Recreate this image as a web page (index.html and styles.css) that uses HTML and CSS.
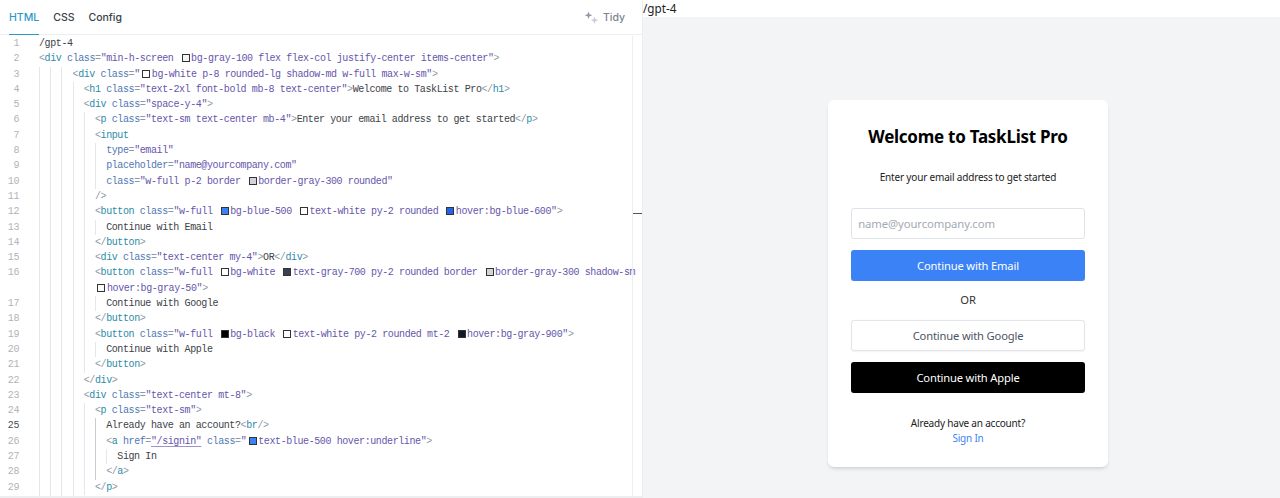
FILE: index.html
```html
<!DOCTYPE html>
<html lang="en">
<head>
<meta charset="utf-8">
<title>Playground</title>
<link rel="stylesheet" href="styles.css">
</head>
<body>
<div class="app">
  <section class="editor">
    <header class="tabs">
      <nav class="tablist">
        <span class="tab active">HTML</span>
        <span class="tab">CSS</span>
        <span class="tab">Config</span>
      </nav>
      <span class="tidy">
        <svg class="tidy-icon" width="15" height="15" viewBox="0 0 15 15"><path class="spark-dark" d="M4.500 1.500l1 2.800 2.800 1-2.800 1-1 2.800-1-2.800-2.800-1 2.800-1z"/><path class="spark-light" d="M10.500 6.500l1 2.800 2.800 1-2.800 1-1 2.800-1-2.800-2.800-1 2.800-1z"/></svg>
        Tidy
      </span>
    </header>
    <div class="code-wrap">
      <div class="code">
        <div class="row"><span class="num">1</span><span class="line"><span class="x">/gpt-4</span></span></div>
        <div class="row"><span class="num">2</span><span class="line"><span class="t">&lt;</span><span class="n">div</span> <span class="a">class</span><span class="t">=</span><span class="s">"min-h-screen <i class="sw gray100"></i>bg-gray-100 flex flex-col justify-center items-center"</span><span class="t">&gt;</span></span></div>
        <div class="row"><span class="num">3</span><span class="line"><i class="g"></i><i class="g"></i><i class="g"></i><span class="t">&lt;</span><span class="n">div</span> <span class="a">class</span><span class="t">=</span><span class="s">"<i class="sw white"></i>bg-white p-8 rounded-lg shadow-md w-full max-w-sm"</span><span class="t">&gt;</span></span></div>
        <div class="row"><span class="num">4</span><span class="line"><i class="g"></i><i class="g"></i><i class="g"></i><i class="g"></i><span class="t">&lt;</span><span class="n">h1</span> <span class="a">class</span><span class="t">=</span><span class="s">"text-2xl font-bold mb-8 text-center"</span><span class="t">&gt;</span><span class="x">Welcome to TaskList Pro</span><span class="t">&lt;/</span><span class="n">h1</span><span class="t">&gt;</span></span></div>
        <div class="row"><span class="num">5</span><span class="line"><i class="g"></i><i class="g"></i><i class="g"></i><i class="g"></i><span class="t">&lt;</span><span class="n">div</span> <span class="a">class</span><span class="t">=</span><span class="s">"space-y-4"</span><span class="t">&gt;</span></span></div>
        <div class="row"><span class="num">6</span><span class="line"><i class="g"></i><i class="g"></i><i class="g"></i><i class="g"></i><i class="g"></i><span class="t">&lt;</span><span class="n">p</span> <span class="a">class</span><span class="t">=</span><span class="s">"text-sm text-center mb-4"</span><span class="t">&gt;</span><span class="x">Enter your email address to get started</span><span class="t">&lt;/</span><span class="n">p</span><span class="t">&gt;</span></span></div>
        <div class="row"><span class="num">7</span><span class="line"><i class="g"></i><i class="g"></i><i class="g"></i><i class="g"></i><i class="g"></i><span class="t">&lt;</span><span class="n">input</span></span></div>
        <div class="row"><span class="num">8</span><span class="line"><i class="g"></i><i class="g"></i><i class="g"></i><i class="g"></i><i class="g"></i><i class="g"></i><span class="a">type</span><span class="t">=</span><span class="s">"email"</span></span></div>
        <div class="row"><span class="num">9</span><span class="line"><i class="g"></i><i class="g"></i><i class="g"></i><i class="g"></i><i class="g"></i><i class="g"></i><span class="a">placeholder</span><span class="t">=</span><span class="s">"name@yourcompany.com"</span></span></div>
        <div class="row"><span class="num">10</span><span class="line"><i class="g"></i><i class="g"></i><i class="g"></i><i class="g"></i><i class="g"></i><i class="g"></i><span class="a">class</span><span class="t">=</span><span class="s">"w-full p-2 border <i class="sw gray300"></i>border-gray-300 rounded"</span></span></div>
        <div class="row"><span class="num">11</span><span class="line"><i class="g"></i><i class="g"></i><i class="g"></i><i class="g"></i><i class="g"></i><span class="t">/&gt;</span></span></div>
        <div class="row"><span class="num">12</span><span class="line"><i class="g"></i><i class="g"></i><i class="g"></i><i class="g"></i><i class="g"></i><span class="t">&lt;</span><span class="n">button</span> <span class="a">class</span><span class="t">=</span><span class="s">"w-full <i class="sw blue500"></i>bg-blue-500 <i class="sw white"></i>text-white py-2 rounded <i class="sw blue600"></i>hover:bg-blue-600"</span><span class="t">&gt;</span></span></div>
        <div class="row"><span class="num">13</span><span class="line"><i class="g"></i><i class="g"></i><i class="g"></i><i class="g"></i><i class="g"></i><i class="g"></i><span class="x">Continue with Email</span></span></div>
        <div class="row"><span class="num">14</span><span class="line"><i class="g"></i><i class="g"></i><i class="g"></i><i class="g"></i><i class="g"></i><span class="t">&lt;/</span><span class="n">button</span><span class="t">&gt;</span></span></div>
        <div class="row"><span class="num">15</span><span class="line"><i class="g"></i><i class="g"></i><i class="g"></i><i class="g"></i><i class="g"></i><span class="t">&lt;</span><span class="n">div</span> <span class="a">class</span><span class="t">=</span><span class="s">"text-center my-4"</span><span class="t">&gt;</span><span class="x">OR</span><span class="t">&lt;/</span><span class="n">div</span><span class="t">&gt;</span></span></div>
        <div class="row"><span class="num">16</span><span class="line"><i class="g"></i><i class="g"></i><i class="g"></i><i class="g"></i><i class="g"></i><span class="t">&lt;</span><span class="n">button</span> <span class="a">class</span><span class="t">=</span><span class="s">"w-full <i class="sw white"></i>bg-white <i class="sw gray700"></i>text-gray-700 py-2 rounded border <i class="sw gray300"></i>border-gray-300 shadow-sm</span></span></div>
        <div class="row"><span class="num"></span><span class="line"><i class="g"></i><i class="g"></i><i class="g"></i><i class="g"></i><i class="g"></i><span class="s"><i class="sw gray50"></i>hover:bg-gray-50"</span><span class="t">&gt;</span></span></div>
        <div class="row"><span class="num">17</span><span class="line"><i class="g"></i><i class="g"></i><i class="g"></i><i class="g"></i><i class="g"></i><i class="g"></i><span class="x">Continue with Google</span></span></div>
        <div class="row"><span class="num">18</span><span class="line"><i class="g"></i><i class="g"></i><i class="g"></i><i class="g"></i><i class="g"></i><span class="t">&lt;/</span><span class="n">button</span><span class="t">&gt;</span></span></div>
        <div class="row"><span class="num">19</span><span class="line"><i class="g"></i><i class="g"></i><i class="g"></i><i class="g"></i><i class="g"></i><span class="t">&lt;</span><span class="n">button</span> <span class="a">class</span><span class="t">=</span><span class="s">"w-full <i class="sw black"></i>bg-black <i class="sw white"></i>text-white py-2 rounded mt-2 <i class="sw gray900"></i>hover:bg-gray-900"</span><span class="t">&gt;</span></span></div>
        <div class="row"><span class="num">20</span><span class="line"><i class="g"></i><i class="g"></i><i class="g"></i><i class="g"></i><i class="g"></i><i class="g"></i><span class="x">Continue with Apple</span></span></div>
        <div class="row"><span class="num">21</span><span class="line"><i class="g"></i><i class="g"></i><i class="g"></i><i class="g"></i><i class="g"></i><span class="t">&lt;/</span><span class="n">button</span><span class="t">&gt;</span></span></div>
        <div class="row"><span class="num">22</span><span class="line"><i class="g"></i><i class="g"></i><i class="g"></i><i class="g"></i><span class="t">&lt;/</span><span class="n">div</span><span class="t">&gt;</span></span></div>
        <div class="row"><span class="num">23</span><span class="line"><i class="g"></i><i class="g"></i><i class="g"></i><i class="g"></i><span class="t">&lt;</span><span class="n">div</span> <span class="a">class</span><span class="t">=</span><span class="s">"text-center mt-8"</span><span class="t">&gt;</span></span></div>
        <div class="row"><span class="num">24</span><span class="line"><i class="g"></i><i class="g"></i><i class="g"></i><i class="g"></i><i class="g"></i><span class="t">&lt;</span><span class="n">p</span> <span class="a">class</span><span class="t">=</span><span class="s">"text-sm"</span><span class="t">&gt;</span></span></div>
        <div class="row"><span class="num current">25</span><span class="line"><i class="g"></i><i class="g"></i><i class="g"></i><i class="g"></i><i class="g"></i><i class="g strong"></i><span class="x">Already have an account?</span><span class="t">&lt;</span><span class="n">br</span><span class="t">/&gt;</span></span></div>
        <div class="row"><span class="num">26</span><span class="line"><i class="g"></i><i class="g"></i><i class="g"></i><i class="g"></i><i class="g"></i><i class="g strong"></i><span class="t">&lt;</span><span class="n">a</span> <span class="a">href</span><span class="t">=</span><span class="s link">"/signin"</span> <span class="a">class</span><span class="t">=</span><span class="s">"<i class="sw blue500"></i>text-blue-500 hover:underline"</span><span class="t">&gt;</span></span></div>
        <div class="row"><span class="num">27</span><span class="line"><i class="g"></i><i class="g"></i><i class="g"></i><i class="g"></i><i class="g"></i><i class="g strong"></i><i class="g"></i><span class="x">Sign In</span></span></div>
        <div class="row"><span class="num">28</span><span class="line"><i class="g"></i><i class="g"></i><i class="g"></i><i class="g"></i><i class="g"></i><i class="g strong"></i><span class="t">&lt;/</span><span class="n">a</span><span class="t">&gt;</span></span></div>
        <div class="row"><span class="num">29</span><span class="line"><i class="g"></i><i class="g"></i><i class="g"></i><i class="g"></i><i class="g"></i><span class="t">&lt;/</span><span class="n">p</span><span class="t">&gt;</span></span></div>
        <div class="row"><span class="num"></span><span class="line"><i class="g"></i><i class="g"></i><i class="g"></i><i class="g"></i></span></div>
      </div>
      <aside class="ruler"><span class="ruler-mark"></span></aside>
    </div>
  </section>
  <section class="preview">
    <div class="path">/gpt-4</div>
    <div class="stage">
      <main class="card">
        <h1 class="title">Welcome to TaskList Pro</h1>
        <p class="lead">Enter your email address to get started</p>
        <div class="stack">
          <input class="field" type="email" placeholder="name@yourcompany.com">
          <button class="btn primary">Continue with Email</button>
          <div class="or">OR</div>
          <button class="btn outline">Continue with Google</button>
          <button class="btn dark">Continue with Apple</button>
        </div>
        <div class="foot">
          <p class="foot-text">Already have an account?<br><a class="signin" href="#">Sign In</a></p>
        </div>
      </main>
    </div>
  </section>
</div>
</body>
</html>
```

FILE: styles.css
```css
* { box-sizing: border-box; }
html, body { margin: 0; height: 498px; overflow: hidden; background: #fff; }
.app { display: flex; height: 498px; }

.editor { width: 642px; flex: none; display: flex; flex-direction: column; border-bottom: 2px solid #eceef0; }
.tabs {
  height: 35px; flex: none; display: flex; justify-content: space-between; align-items: center;
  padding: 0 17px 0 9px; border-bottom: 1px solid #eceef1;
  font-family: Inter, "Liberation Sans", sans-serif; font-size: 10.5px; font-weight: 500;
}
.tablist { display: flex; gap: 14px; align-self: stretch; }
.tab { display: flex; align-items: center; color: #3a414c; margin-bottom: -1px; border-bottom: 1px solid transparent; }
.tab.active { color: #2b9ac9; border-bottom-color: #2b9ac9; }
.tidy { display: flex; align-items: center; gap: 4px; color: #7a8290; }
.tidy-icon { display: block; }
.spark-dark { fill: #8f98a4; }
.spark-light { fill: #c6cdd4; }

.code-wrap { flex: 1; min-height: 0; display: flex; overflow: hidden; padding-top: 1px; }
.code { width: 632px; flex: none; font-family: "Liberation Mono", monospace; font-size: 10px; letter-spacing: -.4px; }
.ruler { flex: 1; border-left: 1px solid #eceef0; padding-top: 177px; }
.ruler-mark { display: block; height: 1px; background: #555; }

.row { display: flex; height: 15.31px; line-height: 15.31px; white-space: pre; }
.num { width: 39px; flex: none; padding-right: 20px; text-align: right; color: #b0b4ba; }
.num.current { color: #4a5058; }
.line { display: block; white-space: pre; }
.g { display: inline-block; width: 11.2px; height: 15.31px; vertical-align: top; border-left: 1px solid #e6e7ea; }
.g.strong { border-left-color: #c9ccd1; }

.t { color: #8d9aa6; }
.n { color: #2c8ba6; }
.a { color: #4f77b5; }
.s { color: #6656ab; }
.x { color: #3d4248; }
.link { text-decoration: underline; text-decoration-color: #9d92cf; text-underline-offset: 2px; }

.sw { display: inline-block; width: 8px; height: 8px; margin: 0 1.5px 0 2.5px; vertical-align: -1px; border: 1px solid #333; }
.white { background: #fff; }
.gray50 { background: #f9fafb; }
.gray100 { background: #f3f4f6; }
.gray300 { background: #d1d5db; }
.gray700 { background: #374151; }
.gray900 { background: #111827; }
.black { background: #000; }
.blue500 { background: #3b82f6; }
.blue600 { background: #2563eb; }

.preview { flex: 1; display: flex; flex-direction: column; min-width: 0; border-left: 1px solid #eceef0; font-family: "Noto Sans", "Open Sans", sans-serif; }
.path { height: 17px; flex: none; font-size: 11.7px; line-height: 17px; color: #222; background: #fff; }
.stage { flex: 1; background: #f3f4f6; display: flex; justify-content: center; padding: 83px 0 0 13px; }
.card {
  width: 280px; height: 367px; padding: 24.4px 23.4px 0; background: #fff; border-radius: 5.8px;
  box-shadow: 0 3px 4.500px -1px rgba(0,0,0,.1), 0 1.500px 3px -1px rgba(0,0,0,.06);
}
.title { margin: 0 0 21px; font-size: 17px; letter-spacing: -.26px; line-height: 25px; font-weight: 700; text-align: center; color: #000; }
.lead { margin: 0 0 23px; font-size: 10px; letter-spacing: -.18px; line-height: 14.6px; text-align: center; color: #222; }
.stack { display: flex; flex-direction: column; gap: 11.5px; }
.field {
  height: 30.6px; width: 100%; padding: 0 5.8px; font: inherit; font-size: 11.3px; letter-spacing: -.1px; color: #111;
  border: 1px solid #dfe2e6; border-radius: 2.900px; background: #fff; outline: 0;
}
.field::placeholder { color: #a4aab3; opacity: 1; }
.btn { height: 30.6px; width: 100%; padding: 0; border-radius: 2.900px; border: 0; font: inherit; font-size: 11.2px; letter-spacing: -.17px; text-align: center; }
.primary { background: #3b82f6; color: #fff; }
.outline { background: #fff; color: #4b5563; border: 1px solid #e3e5e9; box-shadow: 0 .7px 1.500px rgba(0,0,0,.05); }
.dark { background: #000; color: #fff; }
.or { font-size: 11.2px; line-height: 16.5px; text-align: center; color: #333; }
.foot { margin-top: 23.4px; text-align: center; }
.foot-text { margin: 0; font-size: 10px; letter-spacing: -.2px; line-height: 14.6px; color: #222; }
.signin { color: #3b82f6; text-decoration: none; }
```
